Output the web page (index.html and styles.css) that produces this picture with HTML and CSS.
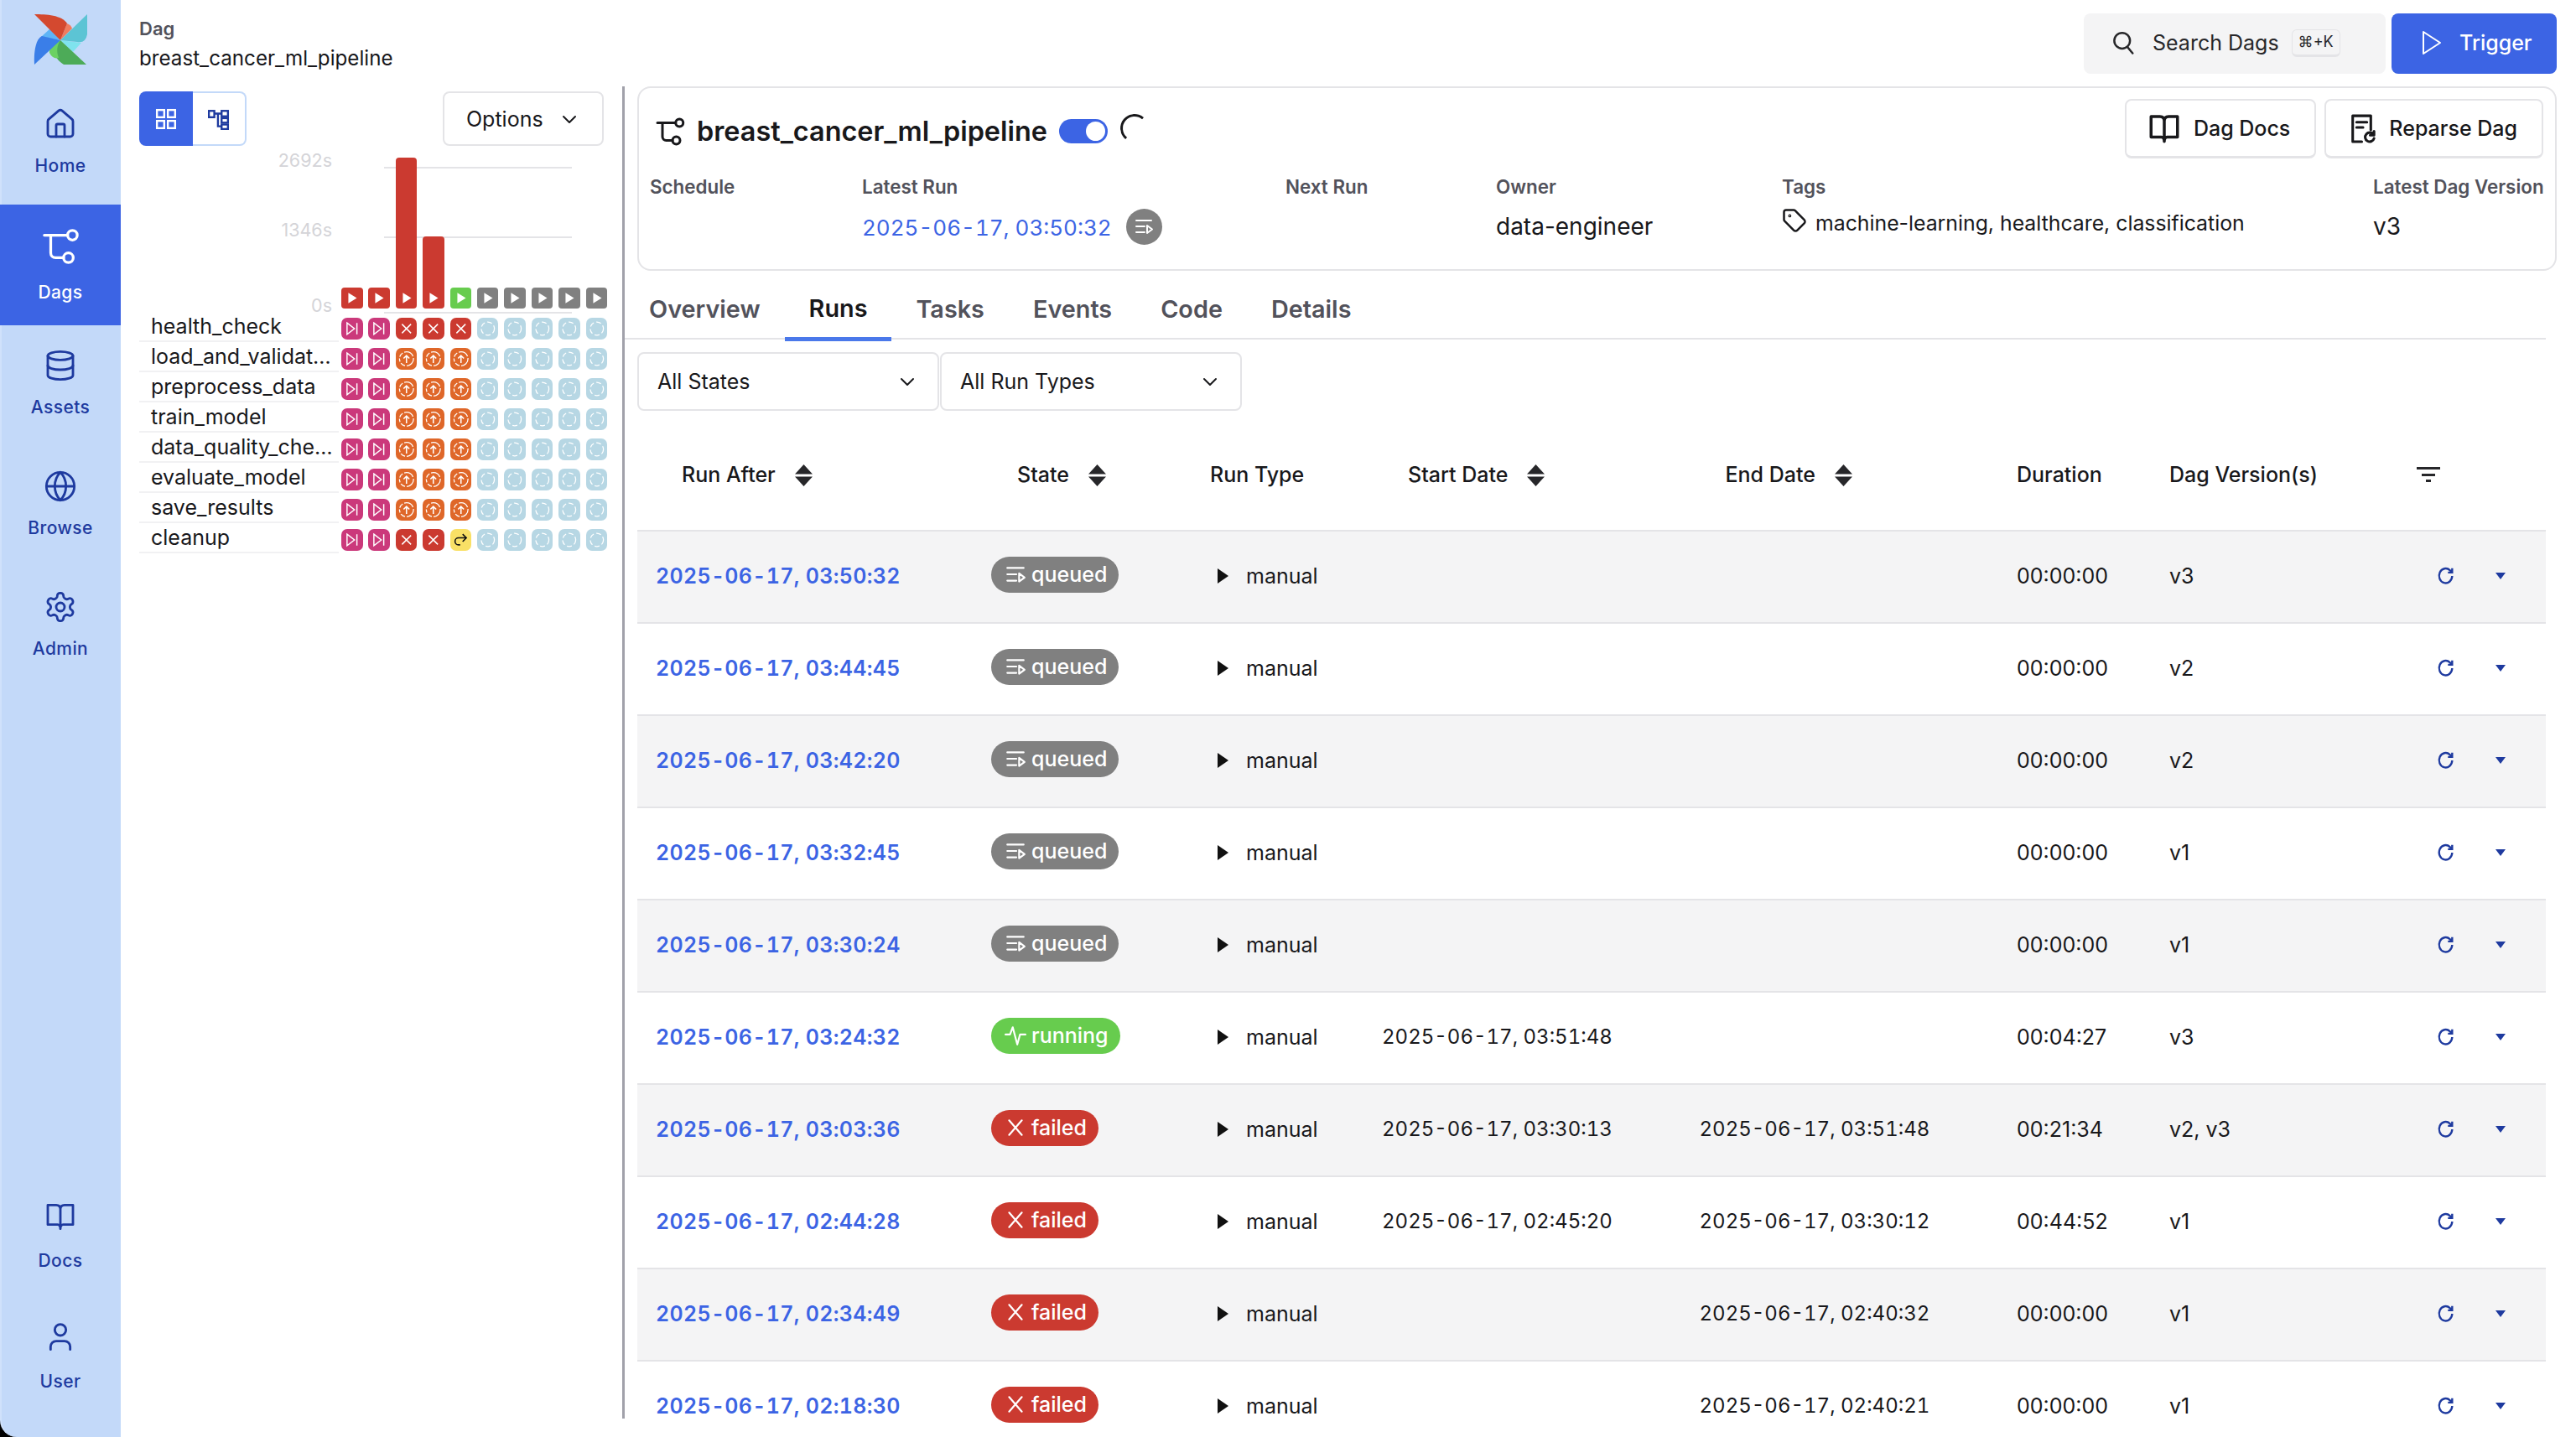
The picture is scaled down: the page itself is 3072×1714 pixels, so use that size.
FILE: index.html
```html
<!doctype html>
<html>
	<head>
		<meta http-equiv="Content-Type" content="text/html; charset=utf-8" />
		<title>breast_cancer_ml_pipeline - Airflow</title>
		<link rel="stylesheet" href="styles.css">
	</head>
	<body>
		<svg class="defs" width="0" height="0">
			<symbol id="i_dag" viewBox="0 0 24 24"><circle cx="19.5" cy="5" r="3"/><circle cx="17" cy="19" r="3"/><path d="M2 5h14.500M6 5v11a3 3 0 0 0 3 3h5"/></symbol>
			<symbol id="i_book" viewBox="0 0 24 24"><path d="M3 4h6q3 0 3 3 0-3 3-3h6v14h-7q-2 0-2 3 0-3-2-3H3zM12 7v14"/></symbol>
			<symbol id="i_queue" viewBox="0 0 24 24"><path d="M3 5h18M3 12h10M3 19h10M16 11l6 4.500-6 4.500z"/></symbol>
			<symbol id="i_sort" viewBox="0 0 21 26"><path d="M10.500 0 21 11.500H0zM0 14.500h21L10.500 26z"/></symbol>
			<symbol id="i_refresh" viewBox="0 0 24 24"><path d="M20 12a8.500 9.500 0 1 1-3-7.500L20 7M20 2v5.500h-5.500"/></symbol>
			<symbol id="i_caret" viewBox="0 0 12 8"><path d="M0 0h12L6 8z"/></symbol>
			<symbol id="i_tri" viewBox="0 0 13 18"><path d="M0 0l13 9-13 9z"/></symbol>
			<symbol id="i_chev" viewBox="0 0 24 24"><path d="m5 9 7 7 7-7"/></symbol>
			<symbol id="i_x" viewBox="0 0 24 24"><path d="M5 4l14 16M19 4 5 20"/></symbol>
			<symbol id="i_pulse" viewBox="0 0 24 24"><path d="M1 11h5l3-8 5 19 3-11h6"/></symbol>

			<symbol id="m_p" viewBox="0 0 26 26"><path d="M8.500 6.500 19 13 8.500 19.500z" fill="#fff"/></symbol>
			<symbol id="m_s" viewBox="0 0 26 26"><path d="M7 6l9 7-9 7zM19 6v14" fill="none" stroke="#fff" stroke-width="1.500"/></symbol>
			<symbol id="m_x" viewBox="0 0 26 26"><path d="M7.500 7.500l11 11M18.500 7.500l-11 11" fill="none" stroke="#fff" stroke-width="1.500"/></symbol>
			<symbol id="m_u" viewBox="0 0 26 26"><circle cx="13" cy="13" r="8.500" fill="none" stroke="#fff" stroke-width="1.300" stroke-dasharray="13 2 6 2 4 2 6 2"/><path d="M13 18v-9M9.500 12.500 13 9l3.500 3.500" fill="none" stroke="#fff" stroke-width="1.600"/></symbol>
			<symbol id="m_n" viewBox="0 0 26 26"><circle cx="13" cy="13" r="8" fill="none" stroke="#fff" stroke-width="1.300" stroke-dasharray="6 3.200"/></symbol>
			<symbol id="m_r" viewBox="0 0 26 26"><path d="M15 6l4.500 4.500L15 15M19 10.500H10a4 4 0 0 0 0 8.500h2" fill="none" stroke="#111" stroke-width="1.600"/></symbol>
		</svg>
		<div class="app">
			<nav class="side">
				<svg class="logo" viewBox="0 0 64 62">
					<path d="M47 46 32 32l25 3z" fill="#7fe3ee"/>
					<path d="M32 32 20 18 9 28z" fill="#5eb4f6"/>
					<path d="M32 32 40 12q5 2 6 6z" fill="#f07c5e"/>
					<path d="M1 1c14 0 33 1 39 11l-8 20z" fill="#d4492f"/>
					<path d="M64 1v24q-2 11-12 9L32 32z" fill="#5cc4d4"/>
					<path d="M63 61H36C22 52 22 40 32 32z" fill="#4dab58"/>
					<path d="M32 32C23 36 18 43 19 47q4 8 11 6c-3-8-2-15 2-21z" fill="#6bd163"/>
					<path d="M1 61C0 45 3 30 10 27l22 5z" fill="#3a7ee8"/>
				</svg>
				<a class="nav_item">
					<svg class="nav_icon" viewBox="0 0 24 24"><path d="M15 21v-8a1 1 0 0 0-1-1h-4a1 1 0 0 0-1 1v8"/><path d="M3 10a2 2 0 0 1 .709-1.528l7-5.999a2 2 0 0 1 2.582 0l7 5.999A2 2 0 0 1 21 10v9a2 2 0 0 1-2 2H5a2 2 0 0 1-2-2z"/></svg>
					<span>Home</span>
				</a>
				<a class="nav_item nav_active">
					<svg class="nav_icon nav_icon_big"><use href="#i_dag"/></svg>
					<span>Dags</span>
				</a>
				<a class="nav_item">
					<svg class="nav_icon" viewBox="0 0 24 24"><ellipse cx="12" cy="5" rx="9" ry="3"/><path d="M3 5v14a9 3 0 0 0 18 0V5"/><path d="M3 12a9 3 0 0 0 18 0"/></svg>
					<span>Assets</span>
				</a>
				<a class="nav_item">
					<svg class="nav_icon" viewBox="0 0 24 24"><circle cx="12" cy="12" r="10"/><path d="M12 2a14.500 14.500 0 0 0 0 20 14.500 14.500 0 0 0 0-20"/><path d="M2 12h20"/></svg>
					<span>Browse</span>
				</a>
				<a class="nav_item">
					<svg class="nav_icon" viewBox="0 0 24 24"><path d="M12.220 2h-.44a2 2 0 0 0-2 2v.18a2 2 0 0 1-1 1.730l-.43.25a2 2 0 0 1-2 0l-.15-.08a2 2 0 0 0-2.730.73l-.22.38a2 2 0 0 0 .73 2.730l.15.1a2 2 0 0 1 1 1.720v.51a2 2 0 0 1-1 1.740l-.15.09a2 2 0 0 0-.73 2.730l.22.38a2 2 0 0 0 2.730.73l.15-.08a2 2 0 0 1 2 0l.43.25a2 2 0 0 1 1 1.730V20a2 2 0 0 0 2 2h.44a2 2 0 0 0 2-2v-.18a2 2 0 0 1 1-1.730l.43-.25a2 2 0 0 1 2 0l.15.08a2 2 0 0 0 2.730-.73l.22-.39a2 2 0 0 0-.73-2.730l-.15-.08a2 2 0 0 1-1-1.740v-.5a2 2 0 0 1 1-1.740l.15-.09a2 2 0 0 0 .73-2.730l-.22-.38a2 2 0 0 0-2.730-.73l-.15.08a2 2 0 0 1-2 0l-.43-.25a2 2 0 0 1-1-1.730V4a2 2 0 0 0-2-2z"/><circle cx="12" cy="12" r="3"/></svg>
					<span>Admin</span>
				</a>
				<div class="nav_space"></div>
				<a class="nav_item">
					<svg class="nav_icon" viewBox="0 2 24 24"><use href="#i_book" width="24" height="24"/></svg>
					<span>Docs</span>
				</a>
				<a class="nav_item">
					<svg class="nav_icon" viewBox="0 2 24 24"><path d="M19 21v-2a4 4 0 0 0-4-4H9a4 4 0 0 0-4 4v2"/><circle cx="12" cy="7" r="4"/></svg>
					<span>User</span>
				</a>
			</nav>
			<main class="main">
				<header class="topbar">
					<div class="crumb">
						<div class="crumb_label">Dag</div>
						<div class="crumb_name">breast_cancer_ml_pipeline</div>
					</div>
					<div class="top_actions">
						<div class="search">
							<svg class="ico search_ico" viewBox="0 0 24 24"><circle cx="11" cy="10" r="7.500"/><path d="m21 22-5-6"/></svg>
							<span>Search Dags</span>
							<kbd class="kbd">⌘+K</kbd>
						</div>
						<button class="trigger">
							<svg class="trigger_ico" viewBox="0 0 24 30"><path d="M2 2l20 13L2 28z"/></svg>
							Trigger
						</button>
					</div>
				</header>
				<div class="split">
					<aside class="left">
						<div class="left_tools">
							<div class="view_group">
								<button class="view_btn view_on">
									<svg class="view_ico" viewBox="0 0 24 24"><rect x="2" y="2" width="8" height="8"/><rect x="14" y="2" width="8" height="8"/><rect x="2" y="14" width="8" height="8"/><rect x="14" y="14" width="8" height="8"/></svg>
								</button>
								<button class="view_btn">
									<svg class="view_ico" viewBox="0 0 24 24"><rect x="1" y="3" width="6" height="7"/><rect x="15" y="3" width="7" height="6"/><rect x="15" y="11" width="7" height="5"/><rect x="15" y="18" width="7" height="5"/><path d="M7 6h8M11 6v14h4"/></svg>
								</button>
							</div>
							<button class="options">Options <svg class="ico chev"><use href="#i_chev"/></svg></button>
						</div>
						<div class="chart">
							<span class="axis axis_top">2692s</span>
							<span class="axis axis_mid">1346s</span>
							<span class="axis axis_low">0s</span>
							<i class="rule rule_top"></i>
							<i class="rule rule_mid"></i>
							<i class="rule rule_low"></i>
							<div class="cols cols_head">
								<div class="bar fail"><svg><use href="#m_p"/></svg></div>
								<div class="bar fail"><svg><use href="#m_p"/></svg></div>
								<div class="bar fail" style="height:180px"><svg><use href="#m_p"/></svg></div>
								<div class="bar fail" style="height:86px"><svg><use href="#m_p"/></svg></div>
								<div class="bar run"><svg><use href="#m_p"/></svg></div>
								<div class="bar queue"><svg><use href="#m_p"/></svg></div>
								<div class="bar queue"><svg><use href="#m_p"/></svg></div>
								<div class="bar queue"><svg><use href="#m_p"/></svg></div>
								<div class="bar queue"><svg><use href="#m_p"/></svg></div>
								<div class="bar queue"><svg><use href="#m_p"/></svg></div>
							</div>
						</div>
						<div class="task">
							<div class="task_name">health_check</div>
							<div class="cols">
								<svg class="cell skip"><use href="#m_s"/></svg><svg class="cell skip"><use href="#m_s"/></svg><svg class="cell fail"><use href="#m_x"/></svg><svg class="cell fail"><use href="#m_x"/></svg><svg class="cell fail"><use href="#m_x"/></svg><svg class="cell none"><use href="#m_n"/></svg><svg class="cell none"><use href="#m_n"/></svg><svg class="cell none"><use href="#m_n"/></svg><svg class="cell none"><use href="#m_n"/></svg><svg class="cell none"><use href="#m_n"/></svg>
							</div>
						</div>
						<div class="task">
							<div class="task_name">load_and_validate_data</div>
							<div class="cols">
								<svg class="cell skip"><use href="#m_s"/></svg><svg class="cell skip"><use href="#m_s"/></svg><svg class="cell up"><use href="#m_u"/></svg><svg class="cell up"><use href="#m_u"/></svg><svg class="cell up"><use href="#m_u"/></svg><svg class="cell none"><use href="#m_n"/></svg><svg class="cell none"><use href="#m_n"/></svg><svg class="cell none"><use href="#m_n"/></svg><svg class="cell none"><use href="#m_n"/></svg><svg class="cell none"><use href="#m_n"/></svg>
							</div>
						</div>
						<div class="task">
							<div class="task_name">preprocess_data</div>
							<div class="cols">
								<svg class="cell skip"><use href="#m_s"/></svg><svg class="cell skip"><use href="#m_s"/></svg><svg class="cell up"><use href="#m_u"/></svg><svg class="cell up"><use href="#m_u"/></svg><svg class="cell up"><use href="#m_u"/></svg><svg class="cell none"><use href="#m_n"/></svg><svg class="cell none"><use href="#m_n"/></svg><svg class="cell none"><use href="#m_n"/></svg><svg class="cell none"><use href="#m_n"/></svg><svg class="cell none"><use href="#m_n"/></svg>
							</div>
						</div>
						<div class="task">
							<div class="task_name">train_model</div>
							<div class="cols">
								<svg class="cell skip"><use href="#m_s"/></svg><svg class="cell skip"><use href="#m_s"/></svg><svg class="cell up"><use href="#m_u"/></svg><svg class="cell up"><use href="#m_u"/></svg><svg class="cell up"><use href="#m_u"/></svg><svg class="cell none"><use href="#m_n"/></svg><svg class="cell none"><use href="#m_n"/></svg><svg class="cell none"><use href="#m_n"/></svg><svg class="cell none"><use href="#m_n"/></svg><svg class="cell none"><use href="#m_n"/></svg>
							</div>
						</div>
						<div class="task">
							<div class="task_name">data_quality_check</div>
							<div class="cols">
								<svg class="cell skip"><use href="#m_s"/></svg><svg class="cell skip"><use href="#m_s"/></svg><svg class="cell up"><use href="#m_u"/></svg><svg class="cell up"><use href="#m_u"/></svg><svg class="cell up"><use href="#m_u"/></svg><svg class="cell none"><use href="#m_n"/></svg><svg class="cell none"><use href="#m_n"/></svg><svg class="cell none"><use href="#m_n"/></svg><svg class="cell none"><use href="#m_n"/></svg><svg class="cell none"><use href="#m_n"/></svg>
							</div>
						</div>
						<div class="task">
							<div class="task_name">evaluate_model</div>
							<div class="cols">
								<svg class="cell skip"><use href="#m_s"/></svg><svg class="cell skip"><use href="#m_s"/></svg><svg class="cell up"><use href="#m_u"/></svg><svg class="cell up"><use href="#m_u"/></svg><svg class="cell up"><use href="#m_u"/></svg><svg class="cell none"><use href="#m_n"/></svg><svg class="cell none"><use href="#m_n"/></svg><svg class="cell none"><use href="#m_n"/></svg><svg class="cell none"><use href="#m_n"/></svg><svg class="cell none"><use href="#m_n"/></svg>
							</div>
						</div>
						<div class="task">
							<div class="task_name">save_results</div>
							<div class="cols">
								<svg class="cell skip"><use href="#m_s"/></svg><svg class="cell skip"><use href="#m_s"/></svg><svg class="cell up"><use href="#m_u"/></svg><svg class="cell up"><use href="#m_u"/></svg><svg class="cell up"><use href="#m_u"/></svg><svg class="cell none"><use href="#m_n"/></svg><svg class="cell none"><use href="#m_n"/></svg><svg class="cell none"><use href="#m_n"/></svg><svg class="cell none"><use href="#m_n"/></svg><svg class="cell none"><use href="#m_n"/></svg>
							</div>
						</div>
						<div class="task">
							<div class="task_name">cleanup</div>
							<div class="cols">
								<svg class="cell skip"><use href="#m_s"/></svg><svg class="cell skip"><use href="#m_s"/></svg><svg class="cell fail"><use href="#m_x"/></svg><svg class="cell fail"><use href="#m_x"/></svg><svg class="cell retry"><use href="#m_r"/></svg><svg class="cell none"><use href="#m_n"/></svg><svg class="cell none"><use href="#m_n"/></svg><svg class="cell none"><use href="#m_n"/></svg><svg class="cell none"><use href="#m_n"/></svg><svg class="cell none"><use href="#m_n"/></svg>
							</div>
						</div>
					</aside>
					<section class="right">
						<div class="card">
							<div class="card_head">
								<div class="card_title">
									<svg class="ico title_ico"><use href="#i_dag"/></svg>
									<h1>breast_cancer_ml_pipeline</h1>
									<span class="toggle"></span>
									<span class="spinner"></span>
								</div>
								<div class="card_btns">
									<button class="btn"><svg class="ico btn_book"><use href="#i_book"/></svg>Dag Docs</button>
									<button class="btn">
										<svg class="ico btn_file" viewBox="0 0 24 24"><path d="M12 22H5V2h14v11M8 7h8M8 11h5"/><path d="M21 16.500a3.500 3.500 0 1 0 .5 3M21.500 14v3h-3"/></svg>
										Reparse Dag
									</button>
								</div>
							</div>
							<div class="stats">
								<div>
									<div class="stat_label">Schedule</div>
								</div>
								<div>
									<div class="stat_label">Latest Run</div>
									<div class="stat_value">
										<a class="latest">2025-06-17, 03:50:32</a>
										<span class="dot"><svg class="ico dot_ico"><use href="#i_queue"/></svg></span>
									</div>
								</div>
								<div>
									<div class="stat_label">Next Run</div>
								</div>
								<div>
									<div class="stat_label">Owner</div>
									<div class="stat_value">data-engineer</div>
								</div>
								<div>
									<div class="stat_label">Tags</div>
									<div class="stat_value tags">
										<svg class="ico tag_ico" viewBox="0 0 24 24"><path d="M12.586 2.586A2 2 0 0 0 11.172 2H4a2 2 0 0 0-2 2v7.172a2 2 0 0 0 .586 1.414l8.704 8.704a2.426 2.426 0 0 0 3.420 0l6.580-6.580a2.426 2.426 0 0 0 0-3.420z"/><circle cx="7.500" cy="7.500" r=".5"/></svg>
										<span>machine-learning, healthcare, classification</span>
									</div>
								</div>
								<div>
									<div class="stat_label">Latest Dag Version</div>
									<div class="stat_value">v3</div>
								</div>
							</div>
						</div>
						<div class="tabs">
							<a class="tab">Overview</a>
							<a class="tab tab_on">Runs</a>
							<a class="tab">Tasks</a>
							<a class="tab">Events</a>
							<a class="tab">Code</a>
							<a class="tab">Details</a>
						</div>
						<div class="filters">
							<div class="select"><span>All States</span><svg class="ico chev"><use href="#i_chev"/></svg></div>
							<div class="select"><span>All Run Types</span><svg class="ico chev"><use href="#i_chev"/></svg></div>
						</div>
						<table class="runs">
							<colgroup>
								<col class="c_after"><col class="c_state"><col class="c_type"><col class="c_date"><col class="c_date"><col class="c_dur"><col class="c_ver"><col class="c_act">
							</colgroup>
							<thead>
								<tr>
									<th class="sortable">Run After<svg class="sort"><use href="#i_sort"/></svg></th>
									<th class="sortable">State<svg class="sort"><use href="#i_sort"/></svg></th>
									<th class="type_head">Run Type</th>
									<th class="sortable">Start Date<svg class="sort"><use href="#i_sort"/></svg></th>
									<th class="sortable">End Date<svg class="sort"><use href="#i_sort"/></svg></th>
									<th>Duration</th>
									<th>Dag Version(s)</th>
									<th><svg class="filter_ico" viewBox="0 0 28 18"><path d="M0 0h28v3H0zM6 8h16v3H6zM11 15h6v3h-6z"/></svg></th>
								</tr>
							</thead>
							<tbody>
								<tr>
									<td><a class="run_link">2025-06-17, 03:50:32</a></td>
									<td><span class="pill pill_queued"><svg class="ico pill_ico"><use href="#i_queue"/></svg>queued</span></td>
									<td><svg class="type_ico"><use href="#i_tri"/></svg>manual</td>
									<td></td><td></td><td>00:00:00</td><td>v3</td>
									<td class="acts"><svg class="ref_ico"><use href="#i_refresh"/></svg><svg class="car_ico"><use href="#i_caret"/></svg></td>
								</tr>
								<tr>
									<td><a class="run_link">2025-06-17, 03:44:45</a></td>
									<td><span class="pill pill_queued"><svg class="ico pill_ico"><use href="#i_queue"/></svg>queued</span></td>
									<td><svg class="type_ico"><use href="#i_tri"/></svg>manual</td>
									<td></td><td></td><td>00:00:00</td><td>v2</td>
									<td class="acts"><svg class="ref_ico"><use href="#i_refresh"/></svg><svg class="car_ico"><use href="#i_caret"/></svg></td>
								</tr>
								<tr>
									<td><a class="run_link">2025-06-17, 03:42:20</a></td>
									<td><span class="pill pill_queued"><svg class="ico pill_ico"><use href="#i_queue"/></svg>queued</span></td>
									<td><svg class="type_ico"><use href="#i_tri"/></svg>manual</td>
									<td></td><td></td><td>00:00:00</td><td>v2</td>
									<td class="acts"><svg class="ref_ico"><use href="#i_refresh"/></svg><svg class="car_ico"><use href="#i_caret"/></svg></td>
								</tr>
								<tr>
									<td><a class="run_link">2025-06-17, 03:32:45</a></td>
									<td><span class="pill pill_queued"><svg class="ico pill_ico"><use href="#i_queue"/></svg>queued</span></td>
									<td><svg class="type_ico"><use href="#i_tri"/></svg>manual</td>
									<td></td><td></td><td>00:00:00</td><td>v1</td>
									<td class="acts"><svg class="ref_ico"><use href="#i_refresh"/></svg><svg class="car_ico"><use href="#i_caret"/></svg></td>
								</tr>
								<tr>
									<td><a class="run_link">2025-06-17, 03:30:24</a></td>
									<td><span class="pill pill_queued"><svg class="ico pill_ico"><use href="#i_queue"/></svg>queued</span></td>
									<td><svg class="type_ico"><use href="#i_tri"/></svg>manual</td>
									<td></td><td></td><td>00:00:00</td><td>v1</td>
									<td class="acts"><svg class="ref_ico"><use href="#i_refresh"/></svg><svg class="car_ico"><use href="#i_caret"/></svg></td>
								</tr>
								<tr>
									<td><a class="run_link">2025-06-17, 03:24:32</a></td>
									<td><span class="pill pill_running"><svg class="ico pill_ico"><use href="#i_pulse"/></svg>running</span></td>
									<td><svg class="type_ico"><use href="#i_tri"/></svg>manual</td>
									<td class="date">2025-06-17, 03:51:48</td><td></td><td>00:04:27</td><td>v3</td>
									<td class="acts"><svg class="ref_ico"><use href="#i_refresh"/></svg><svg class="car_ico"><use href="#i_caret"/></svg></td>
								</tr>
								<tr>
									<td><a class="run_link">2025-06-17, 03:03:36</a></td>
									<td><span class="pill pill_failed"><svg class="ico pill_ico"><use href="#i_x"/></svg>failed</span></td>
									<td><svg class="type_ico"><use href="#i_tri"/></svg>manual</td>
									<td class="date">2025-06-17, 03:30:13</td><td class="date">2025-06-17, 03:51:48</td><td>00:21:34</td><td>v2, v3</td>
									<td class="acts"><svg class="ref_ico"><use href="#i_refresh"/></svg><svg class="car_ico"><use href="#i_caret"/></svg></td>
								</tr>
								<tr>
									<td><a class="run_link">2025-06-17, 02:44:28</a></td>
									<td><span class="pill pill_failed"><svg class="ico pill_ico"><use href="#i_x"/></svg>failed</span></td>
									<td><svg class="type_ico"><use href="#i_tri"/></svg>manual</td>
									<td class="date">2025-06-17, 02:45:20</td><td class="date">2025-06-17, 03:30:12</td><td>00:44:52</td><td>v1</td>
									<td class="acts"><svg class="ref_ico"><use href="#i_refresh"/></svg><svg class="car_ico"><use href="#i_caret"/></svg></td>
								</tr>
								<tr>
									<td><a class="run_link">2025-06-17, 02:34:49</a></td>
									<td><span class="pill pill_failed"><svg class="ico pill_ico"><use href="#i_x"/></svg>failed</span></td>
									<td><svg class="type_ico"><use href="#i_tri"/></svg>manual</td>
									<td></td><td class="date">2025-06-17, 02:40:32</td><td>00:00:00</td><td>v1</td>
									<td class="acts"><svg class="ref_ico"><use href="#i_refresh"/></svg><svg class="car_ico"><use href="#i_caret"/></svg></td>
								</tr>
								<tr>
									<td><a class="run_link">2025-06-17, 02:18:30</a></td>
									<td><span class="pill pill_failed"><svg class="ico pill_ico"><use href="#i_x"/></svg>failed</span></td>
									<td><svg class="type_ico"><use href="#i_tri"/></svg>manual</td>
									<td></td><td class="date">2025-06-17, 02:40:21</td><td>00:00:00</td><td>v1</td>
									<td class="acts"><svg class="ref_ico"><use href="#i_refresh"/></svg><svg class="car_ico"><use href="#i_caret"/></svg></td>
								</tr>
							</tbody>
						</table>
					</section>
				</div>
			</main>
		</div>
	</body>
</html>
```

FILE: styles.css
```css
* {
	box-sizing : border-box;
}
html, body {
	margin : 0;
	height : 100%;
	overflow : hidden;
}
body {
	font-family : "Inter", "Liberation Sans", sans-serif;
	font-size : 25px;
	color : #18181b;
	background-color : #fff;
}
button {
	font : inherit;
	color : inherit;
	background : none;
	cursor : pointer;
}
.defs {
	position : absolute;
}
.ico {
	fill : none;
	stroke : currentColor;
	stroke-width : 2;
	stroke-linecap : round;
	stroke-linejoin : round;
	flex : none;
}
.app {
	display : flex;
	height : 1714px;
	background : linear-gradient(to right, #000 20px, #fff 20px);
}

/* left nav */
.side {
	width : 144px;
	flex : none;
	display : flex;
	flex-direction : column;
	align-items : stretch;
	background-color : #c3d9f9;
	border-bottom-left-radius : 20px;
	border-left : 2px solid #d0e1fb;
	padding-bottom : 20px;
	color : #1e3a9f;
}
.logo {
	width : 64px;
	height : 62px;
	margin : 16px 0 22px 38px;
	flex : none;
}
.nav_item {
	height : 144px;
	flex : none;
	display : flex;
	flex-direction : column;
	align-items : center;
	justify-content : center;
	gap : 17px;
	padding-bottom : 7px;
	font-size : 21px;
	font-weight : 500;
	letter-spacing : 0.4px;
	margin-left : -2px;
}
.nav_icon {
	width : 40px;
	height : 40px;
	fill : none;
	stroke : currentColor;
	stroke-width : 1.7;
	stroke-linecap : round;
	stroke-linejoin : round;
}
.nav_icon_big {
	width : 46px;
	height : 46px;
	margin-bottom : 2px;
}
.nav_active {
	background-color : #3c64e4;
	color : #fff;
	padding-bottom : 0;
}
.nav_space {
	flex : 1;
}

/* main */
.main {
	flex : 1;
	min-width : 0;
	display : flex;
	flex-direction : column;
	padding : 16px 23px 22px 22px;
	overflow : hidden;
	background-color : #fff;
}
.topbar {
	display : flex;
	justify-content : space-between;
	height : 72px;
	margin-bottom : 15px;
	flex : none;
}
.crumb_label {
	font-size : 22px;
	font-weight : 600;
	color : #52525b;
	line-height : 28px;
	margin-top : 4px;
}
.crumb_name {
	font-size : 24.2px;
	line-height : 30px;
	margin-top : 7px;
}
.top_actions {
	display : flex;
	gap : 7px;
}
.search {
	width : 360px;
	display : flex;
	align-items : center;
	background-color : #f4f4f5;
	border-radius : 8px;
	padding : 0 0 2px 32px;
	color : #27272a;
}
.search_ico {
	width : 30px;
	height : 30px;
	margin-right : 20px;
}
.kbd {
	font-family : inherit;
	font-size : 18px;
	margin-left : 15px;
	padding : 3px 7px 5px;
	border-radius : 6px;
	background-color : #f4f4f5;
	border : 1px solid #e4e4e7;
	border-bottom-width : 3px;
}
.trigger {
	width : 197px;
	display : flex;
	align-items : center;
	gap : 21px;
	padding : 0 0 2px 36px;
	border : 0;
	border-radius : 8px;
	background-color : #3c64e4;
	color : #fff;
	font-weight : 500;
}
.trigger_ico {
	width : 24px;
	height : 30px;
	fill : none;
	stroke : #fff;
	stroke-width : 2;
	stroke-linejoin : round;
}
.split {
	flex : 1;
	min-height : 0;
	display : flex;
}

/* grid panel */
.left {
	width : 579px;
	flex : none;
	border-right : 3px solid #a1a1aa;
	padding-top : 6px;
}
.left_tools {
	display : flex;
	justify-content : space-between;
	width : 554px;
	height : 65px;
}
.view_group {
	display : flex;
}
.view_btn {
	width : 64px;
	height : 65px;
	padding : 0;
	display : flex;
	align-items : center;
	justify-content : center;
	border : 2px solid #c3d9f9;
	border-left : 0;
	border-radius : 0 8px 8px 0;
}
.view_on {
	background-color : #3c64e4;
	border : 0;
	border-radius : 8px 0 0 8px;
}
.view_ico {
	width : 26px;
	height : 26px;
	fill : none;
	stroke : #1e3a9f;
	stroke-width : 2.2;
}
.view_on .view_ico {
	stroke : #fff;
}
.options {
	width : 192px;
	display : flex;
	align-items : center;
	padding-left : 26px;
	gap : 19px;
	border : 2px solid #e4e4e7;
	border-radius : 8px;
}
.chev {
	width : 24px;
	height : 24px;
}
.chart {
	position : relative;
	height : 198px;
	display : flex;
	align-items : flex-end;
	padding-bottom : 4px;
}
.axis {
	position : absolute;
	right : 346px;
	font-size : 21.5px;
	line-height : 24px;
	color : #d4d4d8;
}
.axis_top { top : 5px; }
.axis_mid { top : 88px; }
.axis_low { top : 178px; }
.rule {
	position : absolute;
	left : 292px;
	width : 224px;
	height : 2px;
	background-color : #e4e4e7;
}
.rule_top { top : 25px; }
.rule_mid { top : 108px; }
.rule_low { top : 198px; }
.cols {
	display : grid;
	grid-template-columns : repeat(10, 25.5px);
	column-gap : 6.9px;
	margin-left : 3px;
	padding-top : 7px;
}
.cols_head {
	position : relative;
	margin-left : 241px;
	padding-top : 0;
	align-items : end;
}
.bar {
	height : 25px;
	border-radius : 4px;
	display : flex;
	align-items : flex-end;
}
.bar svg {
	width : 25.5px;
	height : 25px;
}
.cell {
	display : block;
	width : 25.5px;
	height : 26px;
	border-radius : 7px;
}
.fail { background-color : #cb3a30; }
.run { background-color : #67cc4e; }
.queue { background-color : #808080; }
.skip { background-color : #cb397b; }
.up { background-color : #df6729; }
.none { background-color : #b7d7e4; }
.retry { background-color : #f9e066; }
.task {
	display : flex;
	height : 36px;
}
.task_name {
	width : 238px;
	height : 36px;
	padding : 0 6px 0 14px;
	line-height : 34px;
	border-bottom : 2px solid #f1f1f3;
	white-space : nowrap;
	overflow : hidden;
	text-overflow : ellipsis;
}

/* details side */
.right {
	flex : 1;
	min-width : 0;
	display : flex;
	flex-direction : column;
	padding-left : 15px;
}
.card {
	height : 220px;
	flex : none;
	border : 2px solid #e4e4e7;
	border-radius : 16px;
	padding : 13px 14px 0 13px;
}
.card_head {
	display : flex;
	justify-content : space-between;
	height : 71px;
}
.card_title {
	display : flex;
	align-items : center;
	padding-top : 6px;
	padding-left : 6px;
}
.card_title h1 {
	margin : 0 14px 0 14px;
	font-size : 32.4px;
	font-weight : 600;
}
.title_ico {
	width : 36px;
	height : 36px;
}
.toggle {
	width : 58px;
	height : 29px;
	border-radius : 15px;
	background-color : #3c64e4;
	display : flex;
	justify-content : flex-end;
	padding : 3px;
}
.toggle::after {
	content : "";
	width : 23px;
	height : 23px;
	border-radius : 50%;
	background-color : #fff;
}
.spinner {
	width : 34px;
	height : 34px;
	margin : -8px 0 0 15px;
	border-radius : 50%;
	border : 3px solid transparent;
	border-left-color : #18181b;
	border-top-color : #18181b;
	transform : rotate(-5deg);
}
.card_btns {
	display : flex;
	gap : 10px;
}
.btn {
	display : flex;
	align-items : center;
	gap : 14px;
	padding : 0 29px 0 24px;
	border : 2px solid #e4e4e7;
	border-bottom-width : 3px;
	border-radius : 8px;
	font-weight : 500;
}
.btn_book {
	width : 42px;
	height : 42px;
}
.btn_file {
	width : 37px;
	height : 37px;
}
.stats {
	display : grid;
	grid-template-columns : 253px 505px 251px 341px 705px 1fr;
	margin-top : 21px;
	white-space : nowrap;
}
.stat_label {
	font-size : 22.4px;
	font-weight : 600;
	color : #52525b;
	line-height : 26px;
}
.stat_value {
	display : flex;
	align-items : center;
	height : 44px;
	margin-top : 12px;
	font-size : 28px;
}
.latest {
	color : #3c64e4;
	font-size : 26px;
	font-variant-numeric : tabular-nums;
	padding-top : 2px;
}
.dot {
	width : 43px;
	height : 43px;
	border-radius : 50%;
	margin-left : 17px;
	background-color : #808080;
	color : #fff;
	display : flex;
	align-items : center;
	justify-content : center;
}
.dot_ico {
	width : 24px;
	height : 24px;
}
.tags {
	font-size : 24.8px;
	align-items : flex-start;
	gap : 10px;
	padding-top : 3px;
}
.tag_ico {
	width : 30px;
	height : 30px;
	margin-top : -3px;
}

/* tabs */
.tabs {
	display : flex;
	height : 72px;
	margin : 10px 13px 0 -15px;
	border-bottom : 2px solid #e4e4e7;
	flex : none;
}
.tab {
	padding : 0 29px 3px;
	display : flex;
	align-items : center;
	font-size : 28.8px;
	font-weight : 600;
	color : #52525b;
	height : 74px;
}
.tab_on {
	color : #18181b;
	border-bottom : 5px solid #4a78ea;
	padding-bottom : 0;
}

/* filters */
.filters {
	display : flex;
	margin-top : 15px;
	flex : none;
}
.select {
	width : 360px;
	height : 70px;
	display : flex;
	align-items : center;
	justify-content : space-between;
	padding : 0 24px 0 22px;
	border : 2px solid #e4e4e7;
	border-radius : 8px;
}
.select + .select {
	margin-left : 1px;
}

/* runs table */
.runs {
	width : 2276px;
	table-layout : fixed;
	border-collapse : collapse;
	margin-top : 10px;
	flex : none;
}
.c_after { width : 400px; }
.c_state { width : 263px; }
.c_type { width : 203px; }
.c_date { width : 378.5px; }
.c_dur { width : 182px; }
.c_ver { width : 295px; }
.c_act { width : 176px; }
th {
	height : 133px;
	padding : 0 0 0 22px;
	text-align : left;
	font-weight : 500;
	border-bottom : 2px solid #e4e4e7;
}
th.sortable {
	padding-left : 53px;
}
th.type_head {
	padding-left : 20px;
}
.sort {
	width : 21px;
	height : 26px;
	margin-left : 23px;
	vertical-align : -5px;
	fill : #27272a;
}
.filter_ico {
	width : 28px;
	height : 18px;
	fill : #27272a;
	display : block;
}
td {
	height : 110px;
	padding : 0 0 3px 22px;
	border-bottom : 2px solid #e4e4e7;
	white-space : nowrap;
}
tbody tr:nth-child(odd) {
	background-color : #f4f4f5;
}
.run_link {
	color : #3c64e4;
	font-weight : 600;
	font-variant-numeric : tabular-nums;
	letter-spacing : 0.3px;
}
.date {
	font-size : 24px;
	font-variant-numeric : tabular-nums;
}
.pill {
	display : inline-flex;
	align-items : center;
	height : 43px;
	border-radius : 22px;
	padding : 0 14px 0 16px;
	gap : 6px;
	margin-bottom : 3px;
	color : #fff;
	font-weight : 500;
	vertical-align : middle;
}
.pill_ico {
	width : 26px;
	height : 26px;
}
.pill_queued { background-color : #808080; }
.pill_running { background-color : #67cc4e; }
.pill_failed { background-color : #cb3a30; }
.type_ico {
	width : 13px;
	height : 18px;
	margin : 0 21px 0 7px;
	vertical-align : 0;
	fill : #111;
}
.acts {
	padding-left : 46px;
	color : #1e3a9f;
}
.ref_ico {
	width : 22px;
	height : 22px;
	margin-bottom : 3px;
	vertical-align : middle;
	fill : none;
	stroke : currentColor;
	stroke-width : 2.6;
}
.car_ico {
	width : 12px;
	height : 8px;
	margin : 0 0 3px 48px;
	vertical-align : middle;
	fill : currentColor;
}
```
